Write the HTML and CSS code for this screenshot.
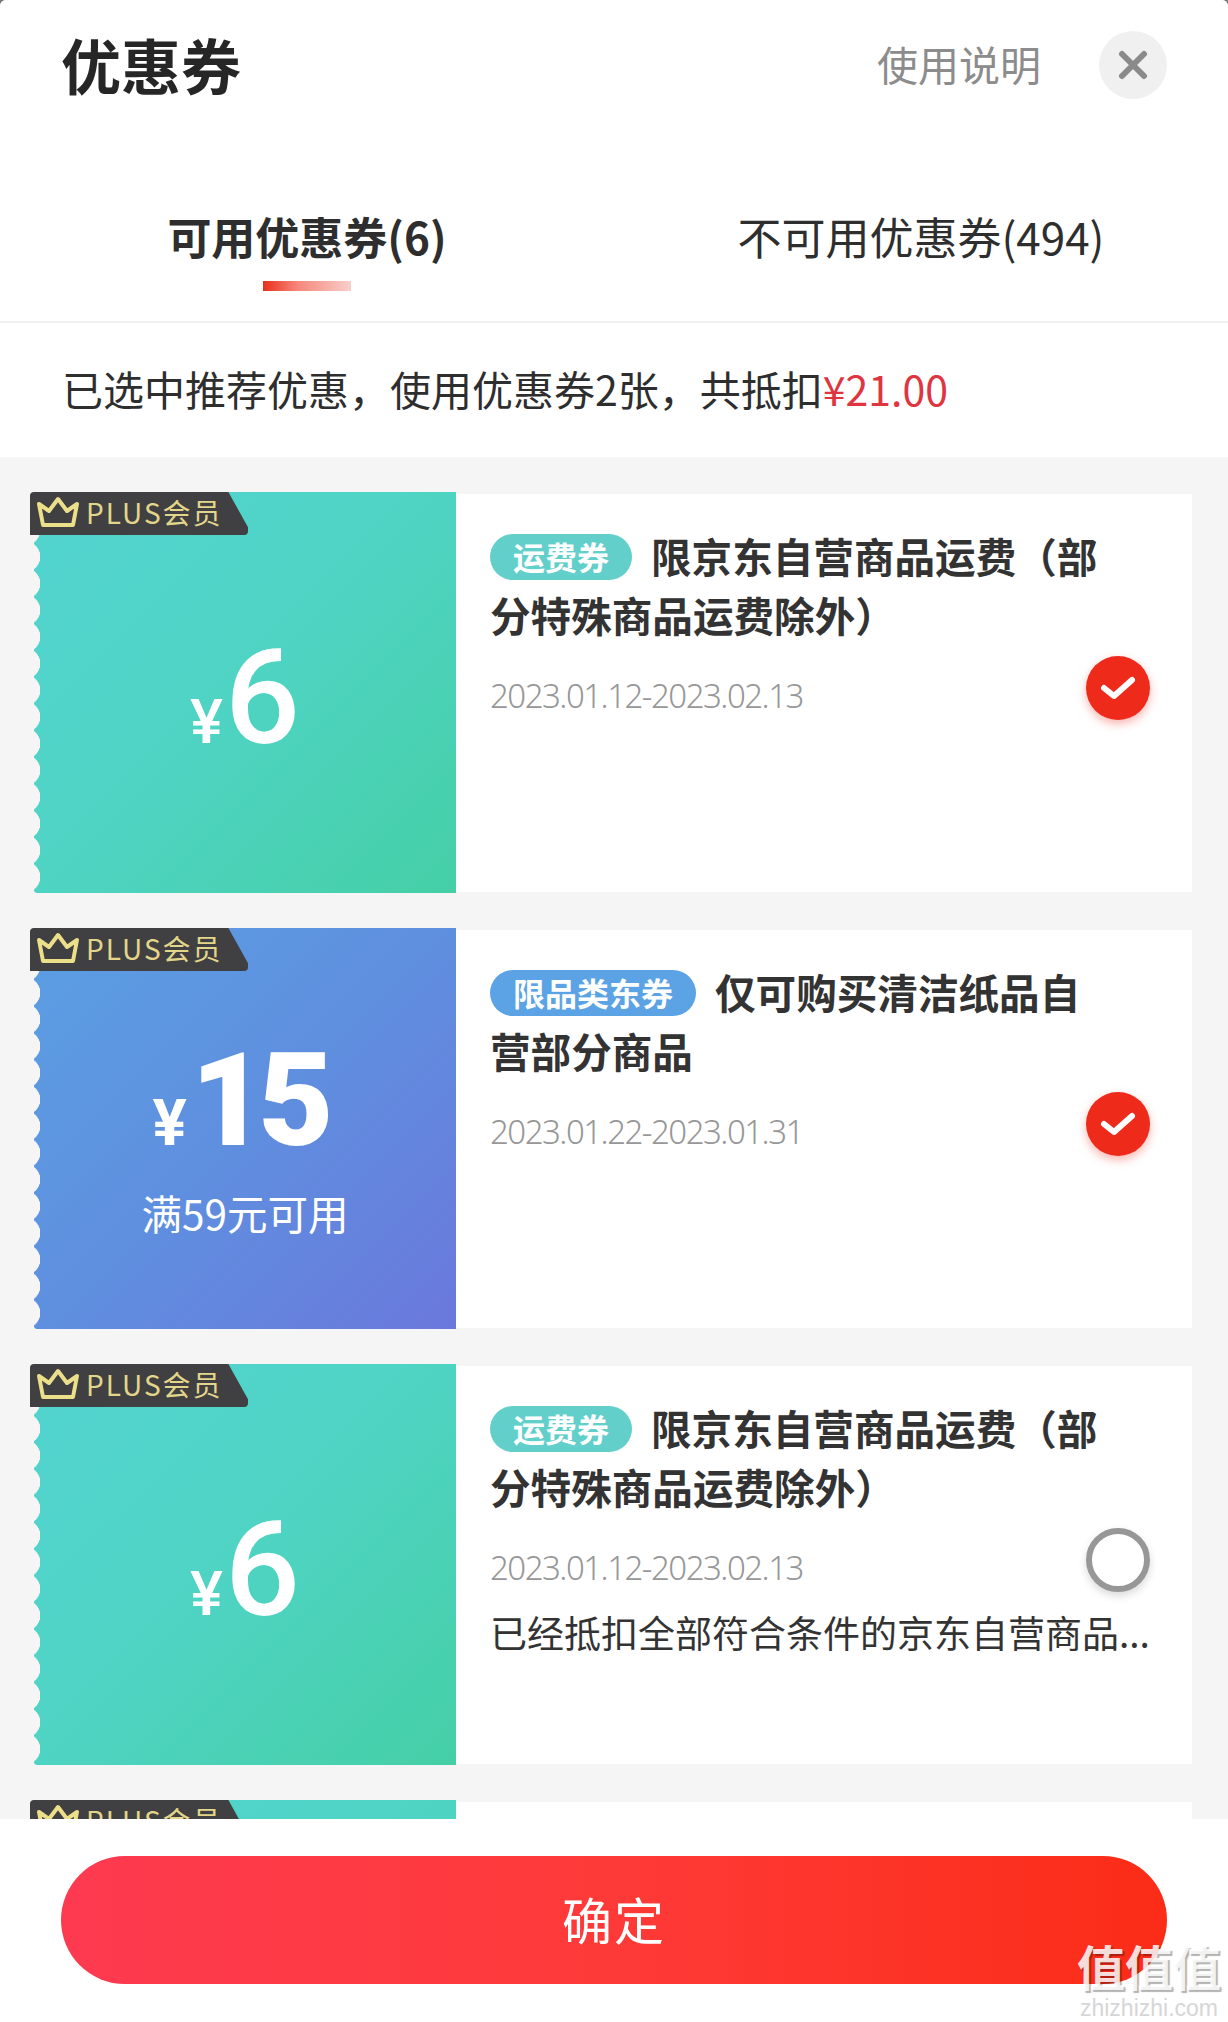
FILE: index.html
```html
<!DOCTYPE html>
<html lang="zh-CN">
<head>
  <meta charset="UTF-8" />
  <title>优惠券</title>
  <link rel="stylesheet" href="styles.css">
</head>
<body>

<div class="sheet">
  <header class="top">
    <h1>优惠券</h1>
    <a class="help">使用说明</a>
    <button class="close" aria-label="关闭">
      <svg viewBox="0 0 30 30" width="30" height="30"><path d="M4 4 L26 26 M26 4 L4 26" /></svg>
    </button>
  </header>

  <nav class="tabs">
    <div class="tab active">可用优惠券(6)</div>
    <div class="tab">不可用优惠券(494)</div>
  </nav>

  <p class="summary">已选中推荐优惠，使用优惠券2张，共抵扣<span class="price">¥21.00</span></p>

  <main class="list">
    <section class="coupon">
      <div class="stub green">
        <div class="plus">
          <svg class="crown" viewBox="0 0 44 32" width="44" height="32"><path d="M3 8 L13 15 L22 3 L31 15 L41 8 L37 29 L7 29 Z" /></svg>
          <span>PLUS会员</span>
        </div>
        <div class="amount"><span class="yen">¥</span><span class="num">6</span></div>
      </div>
      <div class="detail">
        <h3><span class="tag teal">运费券</span>限京东自营商品运费（部分特殊商品运费除外）</h3>
        <p class="date">2023.01.12-2023.02.13</p>
        <span class="check on">
          <svg viewBox="0 0 36 28" width="36" height="28"><path d="M4 14 L14 22 L32 6" /></svg>
        </span>
      </div>
    </section>

    <section class="coupon">
      <div class="stub blue">
        <div class="plus">
          <svg class="crown" viewBox="0 0 44 32" width="44" height="32"><path d="M3 8 L13 15 L22 3 L31 15 L41 8 L37 29 L7 29 Z" /></svg>
          <span>PLUS会员</span>
        </div>
        <div class="amount heavy"><span class="yen">¥</span><span class="num">15</span></div>
        <div class="limit">满59元可用</div>
      </div>
      <div class="detail">
        <h3><span class="tag sky">限品类东券</span>仅可购买清洁纸品自营部分商品</h3>
        <p class="date">2023.01.22-2023.01.31</p>
        <span class="check on">
          <svg viewBox="0 0 36 28" width="36" height="28"><path d="M4 14 L14 22 L32 6" /></svg>
        </span>
      </div>
    </section>

    <section class="coupon">
      <div class="stub green">
        <div class="plus">
          <svg class="crown" viewBox="0 0 44 32" width="44" height="32"><path d="M3 8 L13 15 L22 3 L31 15 L41 8 L37 29 L7 29 Z" /></svg>
          <span>PLUS会员</span>
        </div>
        <div class="amount"><span class="yen">¥</span><span class="num">6</span></div>
      </div>
      <div class="detail">
        <h3><span class="tag teal">运费券</span>限京东自营商品运费（部分特殊商品运费除外）</h3>
        <p class="date">2023.01.12-2023.02.13</p>
        <p class="note">已经抵扣全部符合条件的京东自营商品...</p>
        <span class="check"></span>
      </div>
    </section>

    <section class="coupon">
      <div class="stub green">
        <div class="plus">
          <svg class="crown" viewBox="0 0 44 32" width="44" height="32"><path d="M3 8 L13 15 L22 3 L31 15 L41 8 L37 29 L7 29 Z" /></svg>
          <span>PLUS会员</span>
        </div>
      </div>
      <div class="detail"></div>
    </section>
  </main>

  <footer class="bottom">
    <button class="confirm">确定</button>
  </footer>

  <div class="watermark">
    <div class="wm-big">值值值</div>
    <div class="wm-small">zhizhizhi.com</div>
  </div>
</div>

</body>
</html>
```

FILE: styles.css
```css
* {
  box-sizing: border-box;
}
html, body {
  margin: 0;
  padding: 0;
  height: 2022px;
  overflow: hidden;
  background: #777;
}
body {
  font-family: "Noto Sans CJK SC", "Noto Sans", sans-serif;
  color: #262626;
}
.sheet {
  position: relative;
  width: 1228px;
  height: 2022px;
  background: #f5f5f5;
  border-radius: 6px 6px 0 0;
  overflow: hidden;
  display: flex;
  flex-direction: column;
}

/* header */
.top {
  height: 130px;
  background: #fff;
  display: flex;
  align-items: center;
  padding: 0 61px 0 61px;
}
.top h1 {
  margin: -2px auto 0 0;
  font-size: 60px;
  font-weight: 700;
  line-height: 1;
}
.help {
  font-size: 41px;
  color: #8c8c8c;
  margin: -4px 58px 0 0;
  line-height: 1;
}
.close {
  width: 68px;
  height: 68px;
  border: none;
  border-radius: 50%;
  background: #f0f0f0;
  padding: 0;
  display: flex;
  align-items: center;
  justify-content: center;
}
.close path {
  fill: none;
  stroke: #8a8a8a;
  stroke-width: 6;
  stroke-linecap: round;
}

/* tabs */
.tabs {
  height: 193px;
  background: #fff;
  border-bottom: 2px solid #f0f0f0;
  display: flex;
}
.tab {
  position: relative;
  flex: 1;
  text-align: center;
  padding-top: 79px;
  font-size: 44px;
  line-height: 54px;
  color: #2e2e2e;
}
.tab.active {
  font-weight: 700;
}
.tab.active::after {
  content: "";
  position: absolute;
  left: 263px;
  top: 151px;
  width: 88px;
  height: 10px;
  background: linear-gradient(90deg, #e9301c 0%, #f6887c 40%, #f7cfca 100%);
}

.summary {
  margin: 0;
  height: 134px;
  background: #fff;
  padding: 38px 0 0 62px;
  font-size: 41px;
  line-height: 54px;
  color: #2e2e2e;
}
.price {
  color: #df3540;
}

/* coupons */
.list {
  flex: 1;
  min-height: 0;
  overflow: hidden;
  padding: 35px 36px 0 30px;
  display: flex;
  flex-direction: column;
  gap: 35px;
}
.coupon {
  flex: none;
  height: 401px;
  display: flex;
}
.stub {
  position: relative;
  width: 426px;
  display: flex;
  flex-direction: column;
  align-items: center;
  justify-content: center;
  padding: 10px 0 0 4px;
  color: #fff;
}
.stub::before {
  content: "";
  position: absolute;
  left: 0;
  top: 0;
  bottom: 0;
  width: 12px;
  background:
    linear-gradient(#f5f5f5, #f5f5f5) 0 0 / 4px 100% no-repeat,
    radial-gradient(circle 15.5px at -5px 50%, #f5f5f5 97%, transparent 100%) 0 -2px / 12px 26.7px repeat-y;
}
.green {
  background: linear-gradient(135deg, #52d3d0 0%, #4fd4c5 45%, #45cfa6 100%);
}
.blue {
  background: linear-gradient(135deg, #5a9fe2 0%, #5f8fdf 50%, #6a78dc 100%);
  padding-top: 16px;
}
.plus {
  position: absolute;
  left: 0;
  top: 0;
  z-index: 1;
  height: 43px;
  width: 218px;
  background: #403f41;
  border-radius: 4px 0 4px 0;
  clip-path: polygon(0 0, 91% 0, 100% 82%, 100% 100%, 0 100%);
  display: flex;
  align-items: center;
  padding: 0 0 4px 6px;
  color: #e3d68a;
  font-size: 28px;
  letter-spacing: 2px;
}
.crown {
  margin-right: 6px;
  flex: none;
}
.crown path {
  fill: none;
  stroke: #ecdf8a;
  stroke-width: 4;
  stroke-linejoin: round;
}
.amount {
  display: flex;
  align-items: baseline;
  justify-content: center;
  font-family: "Roboto", "Noto Sans", sans-serif;
  font-weight: 500;
  line-height: 1;
}
.yen {
  font-size: 62px;
  font-weight: 500;
  margin-right: 2px;
}
.num {
  font-size: 132px;
}
.heavy {
  font-weight: 900;
}
.heavy .yen {
  font-size: 64px;
  font-weight: 700;
  margin-right: 4px;
}
.heavy .num {
  font-size: 130px;
  letter-spacing: -8px;
  margin-right: 12px;
}
.limit {
  font-size: 40.5px;
  line-height: 50px;
  margin-top: 22px;
}

.detail {
  position: relative;
  flex: 1;
  margin: 2px 0 1px;
  background: #fff;
  padding: 32px 82px 0 34px;
}
.detail h3 {
  margin: 0;
  font-size: 40.6px;
  font-weight: 700;
  line-height: 59px;
  color: #333;
}
.tag {
  display: inline-block;
  vertical-align: 3px;
  height: 46px;
  padding: 0 23px;
  margin-right: 19px;
  border-radius: 23px;
  font-size: 32px;
  line-height: 45px;
  color: #fff;
}
.teal {
  background: #62cfcb;
}
.sky {
  background: #5ba3e4;
}
.date {
  margin: 29px 0 0;
  font-family: "Noto Sans", sans-serif;
  font-size: 33px;
  font-weight: 300;
  letter-spacing: -1.5px;
  line-height: 46px;
  color: #979797;
}
.note {
  margin: 18px -60px 0 0;
  font-size: 37px;
  line-height: 46px;
  color: #333;
  white-space: nowrap;
}
.check {
  position: absolute;
  right: 42px;
  top: 162px;
  width: 64px;
  height: 64px;
  border-radius: 50%;
  border: 6px solid #979797;
  background: #fff;
  box-shadow: 0 4px 8px rgba(0, 0, 0, 0.15);
  display: flex;
  align-items: center;
  justify-content: center;
}
.check.on {
  border: none;
  background: #ee2a1b;
  box-shadow: 0 4px 10px rgba(238, 42, 27, 0.35);
}
.check path {
  fill: none;
  stroke: #fff;
  stroke-width: 6;
  stroke-linecap: round;
  stroke-linejoin: round;
}

/* footer */
.bottom {
  height: 203px;
  background: #fff;
  padding: 37px 61px 0;
}
.confirm {
  display: block;
  width: 100%;
  height: 128px;
  border: none;
  border-radius: 64px;
  background: linear-gradient(90deg, #fd3a50 0%, #fe3a38 50%, #fb2c17 100%);
  color: #fff;
  font-family: inherit;
  font-size: 50px;
  letter-spacing: 2px;
  padding: 0 0 4px;
}

.watermark {
  position: absolute;
  right: 6px;
  bottom: 0;
  width: 146px;
  text-align: center;
  color: rgba(255, 255, 255, 0.85);
}
.wm-big {
  font-size: 48px;
  font-weight: 700;
  line-height: 58px;
  text-shadow: 2px 2px 1px rgba(0, 0, 0, 0.3);
}
.wm-small {
  font-family: "Liberation Sans", sans-serif;
  font-size: 23px;
  line-height: 28px;
  color: #d6d6d6;
}
```
